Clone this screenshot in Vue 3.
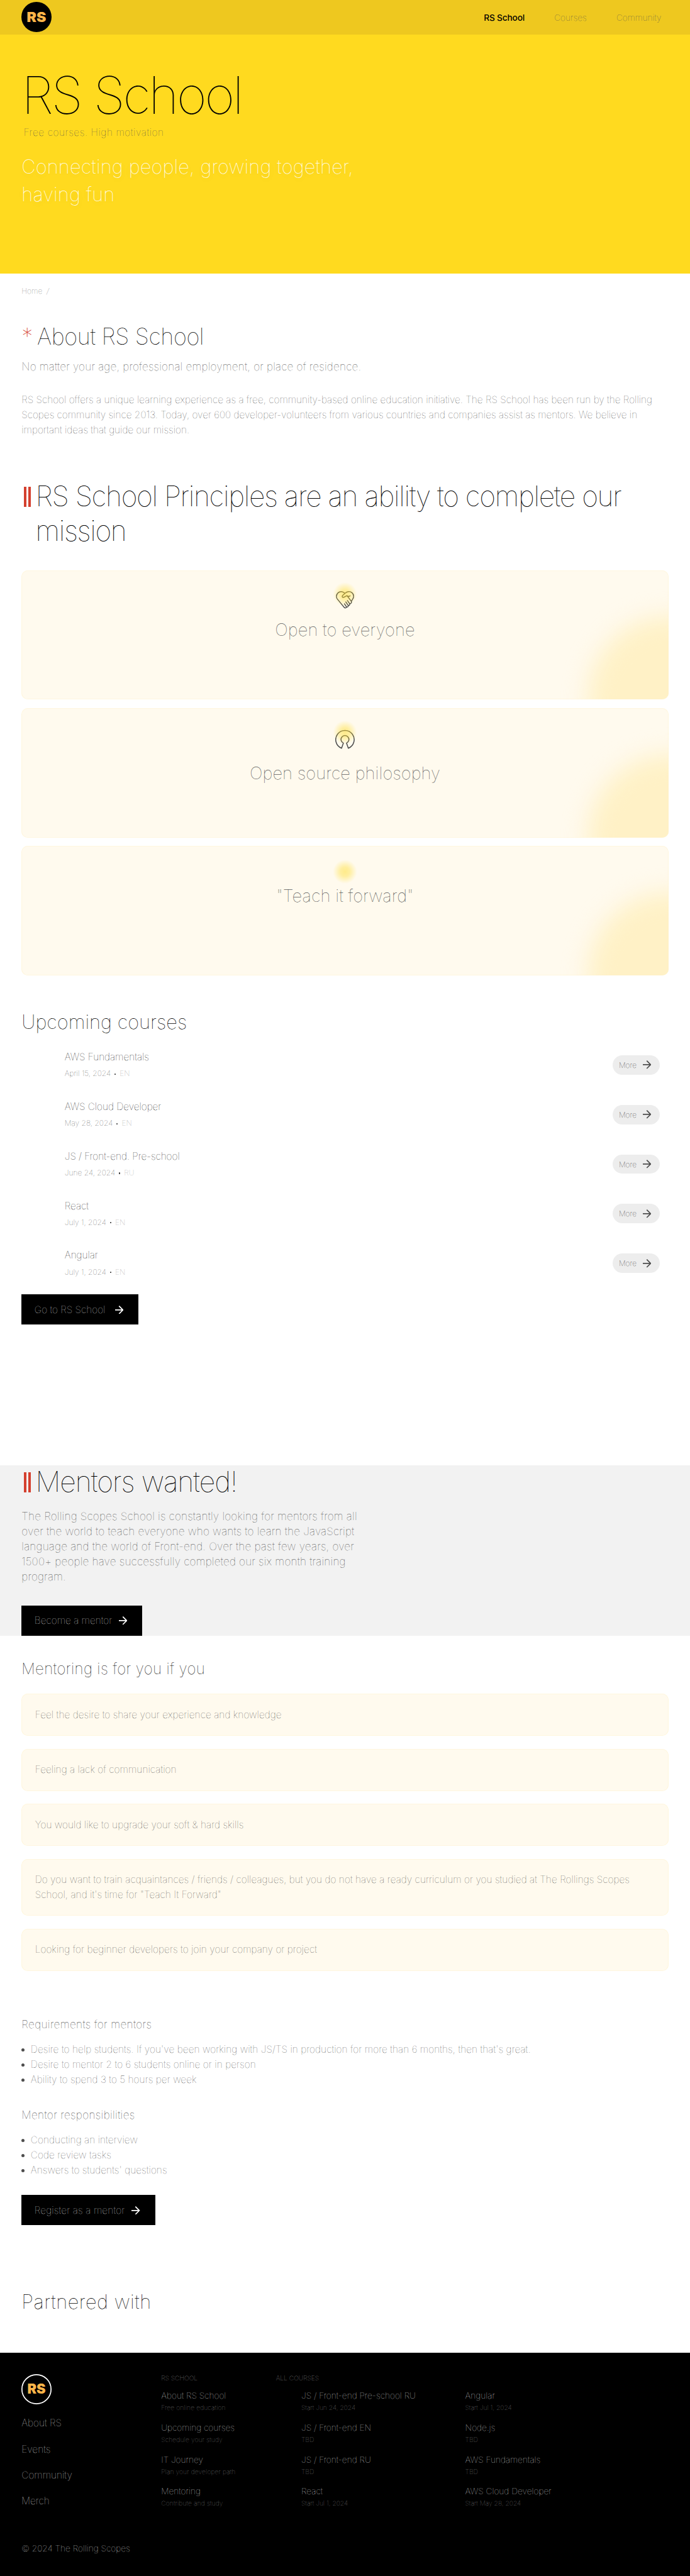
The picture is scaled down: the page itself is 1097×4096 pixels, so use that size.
<script setup>
const nav = [
  { label: 'RS School', active: true },
  { label: 'Courses' },
  { label: 'Community' },
]
const principles = [
  { title: 'Open to everyone', icon: 'heart' },
  { title: 'Open source philosophy', icon: 'source' },
  { title: '"Teach it forward"', icon: 'teach' },
]
const courses = [
  { title: 'AWS Fundamentals', date: 'April 15, 2024', lang: 'EN' },
  { title: 'AWS Cloud Developer', date: 'May 28, 2024', lang: 'EN' },
  { title: 'JS / Front-end. Pre-school', date: 'June 24, 2024', lang: 'RU' },
  { title: 'React', date: 'July 1, 2024', lang: 'EN' },
  { title: 'Angular', date: 'July 1, 2024', lang: 'EN' },
]
const reasons = [
  'Feel the desire to share your experience and knowledge',
  'Feeling a lack of communication',
  'You would like to upgrade your soft & hard skills',
  'Do you want to train acquaintances / friends / colleagues, but you do not have a ready curriculum or you studied at The Rollings Scopes School, and it\'s time for "Teach It Forward"',
  'Looking for beginner developers to join your company or project',
]
const requirements = [
  "Desire to help students. If you've been working with JS/TS in production for more than 6 months, then that's great.",
  'Desire to mentor 2 to 6 students online or in person',
  'Ability to spend 3 to 5 hours per week',
]
const responsibilities = ['Conducting an interview', 'Code review tasks', "Answers to students' questions"]
const footerLinks = ['About RS', 'Events', 'Community', 'Merch']
const schoolLinks = [
  ['About RS School', 'Free online education'],
  ['Upcoming courses', 'Schedule your study'],
  ['IT Journey', 'Plan your developer path'],
  ['Mentoring', 'Contribute and study'],
]
const coursesLeft = [
  ['JS / Front-end Pre-school RU', 'Start Jun 24, 2024'],
  ['JS / Front-end EN', 'TBD'],
  ['JS / Front-end RU', 'TBD'],
  ['React', 'Start Jul 1, 2024'],
]
const coursesRight = [
  ['Angular', 'Start Jul 1, 2024'],
  ['Node.js', 'TBD'],
  ['AWS Fundamentals', 'TBD'],
  ['AWS Cloud Developer', 'Start May 28, 2024'],
]
</script>

<template>
  <div class="page">
    <header class="header">
      <svg class="logo" viewBox="0 0 56 56">
        <circle cx="28" cy="28" r="28" fill="#000" />
        <text x="10" y="37" class="logo-text" textLength="36" lengthAdjust="spacingAndGlyphs">RS</text>
      </svg>
      <nav class="nav">
        <a v-for="n in nav" :key="n.label" :class="{ active: n.active }">{{ n.label }}</a>
      </nav>
    </header>

    <section class="hero">
      <h1>RS School</h1>
      <p class="hero-sub">Free courses. High motivation</p>
      <p class="hero-tag">Connecting people, growing together, having fun</p>
    </section>

    <div class="crumbs"><span>Home</span><i>/</i></div>

    <section class="wrap">
      <h2 class="about-title"><span class="star">*</span>About RS School</h2>
      <p class="lead">No matter your age, professional employment, or place of residence.</p>
      <p class="about-text">RS School offers a unique learning experience as a free, community-based online education initiative. The RS School has been run by the Rolling Scopes community since 2013. Today, over 600 developer-volunteers from various countries and companies assist as mentors. We believe in important ideas that guide our mission.</p>

      <div class="bar-title principles-title">
        <span class="bars"><b></b><b></b></span>
        <h2>RS School Principles are an ability to complete our mission</h2>
      </div>

      <div class="principles">
        <article v-for="p in principles" :key="p.title" class="principle" :class="p.icon">
          <div class="corner"></div>
          <div class="principle-icon">
            <svg v-if="p.icon === 'heart'" width="36" height="34" viewBox="0 0 36 34" fill="none" stroke="#4d4d4d" stroke-width="1.7" stroke-linecap="round" stroke-linejoin="round">
              <path d="M17.800 5.200C14.500 1.200 8.800 .9 5.200 4.200C1.400 7.800 1.200 13 4.500 16.500L16.300 31C17.800 33 20.500 32.500 21 30.500C23 31 24.500 29.500 24 27.600C26 28 27.600 26.200 26.600 24.200C29 24.600 31 22.500 29.800 20L32 16.500C35 13 34.800 7.500 31.300 4.200C27.500 .9 22 1.200 18.300 5L13.500 9.400C12.200 10.900 13.200 13 15.500 12.600C18 12.200 20 9.700 22 9.700L29.800 20M22 9.700L25.200 11L27.600 9.800M17 24.500L21 30.500M19.500 21L24 27.600M22.500 18.500L26.600 24.200" />
            </svg>
            <svg v-else-if="p.icon === 'source'" width="36" height="36" viewBox="0 0 36 36" fill="none" stroke="#4d4d4d" stroke-width="1.8" stroke-linejoin="round">
              <path d="M11.700 34.700A17.100 17.100 0 1 1 24.300 34.700L20.900 25.200A7.300 7.300 0 1 0 15.100 25.200Z" />
            </svg>
            <span class="glow"></span>
          </div>
          <h3>{{ p.title }}</h3>
        </article>
      </div>

      <h2 class="upcoming">Upcoming courses</h2>
      <ul class="courses">
        <li v-for="c in courses" :key="c.title">
          <div>
            <p class="course-title">{{ c.title }}</p>
            <p class="course-date"><span>{{ c.date }}</span><b></b><em>{{ c.lang }}</em></p>
          </div>
          <a class="more">More
            <svg width="16" height="16" viewBox="0 0 16 16" fill="none" stroke="#4d4d4d" stroke-width="2"><path d="M0 8H14.500M7.300 .8L14.500 8L7.300 15.200" /></svg>
          </a>
        </li>
      </ul>
      <a class="btn btn-go">Go to RS School
        <svg width="16" height="16" viewBox="0 0 16 16" fill="none" stroke="#fff" stroke-width="2"><path d="M0 8H14.500M7.300 .8L14.500 8L7.300 15.200" /></svg>
      </a>
    </section>

    <section class="mentors">
      <div class="bar-title">
        <span class="bars"><b></b><b></b></span>
        <h2>Mentors wanted!</h2>
      </div>
      <p class="mentors-text">The Rolling Scopes School is constantly looking for mentors from all over the world to teach everyone who wants to learn the JavaScript language and the world of Front-end. Over the past few years, over 1500+ people have successfully completed our six month training program.</p>
      <a class="btn btn-become">Become a mentor
        <svg width="16" height="16" viewBox="0 0 16 16" fill="none" stroke="#fff" stroke-width="2"><path d="M0 8H14.500M7.300 .8L14.500 8L7.300 15.200" /></svg>
      </a>
    </section>

    <section class="wrap">
      <h3 class="mentoring-title">Mentoring is for you if you</h3>
      <div class="reasons">
        <p v-for="r in reasons" :key="r">{{ r }}</p>
      </div>
      <h4 class="req-title">Requirements for mentors</h4>
      <ul class="dots"><li v-for="r in requirements" :key="r">{{ r }}</li></ul>
      <h4 class="resp-title">Mentor responsibilities</h4>
      <ul class="dots"><li v-for="r in responsibilities" :key="r">{{ r }}</li></ul>
      <a class="btn btn-register">Register as a mentor
        <svg width="16" height="16" viewBox="0 0 16 16" fill="none" stroke="#fff" stroke-width="2"><path d="M0 8H14.500M7.300 .8L14.500 8L7.300 15.200" /></svg>
      </a>
      <h2 class="partners">Partnered with</h2>
    </section>

    <footer class="footer">
      <div class="footer-main">
        <div class="footer-nav">
          <svg class="logo" viewBox="0 0 56 56">
            <circle cx="28" cy="28" r="27" fill="#000" stroke="#fff" stroke-width="2" />
            <text x="11" y="36.500" class="logo-text" textLength="34" lengthAdjust="spacingAndGlyphs">RS</text>
          </svg>
          <a v-for="l in footerLinks" :key="l">{{ l }}</a>
        </div>
        <div class="footer-col footer-school">
          <h5>RS SCHOOL</h5>
          <div v-for="l in schoolLinks" :key="l[0]" class="entry"><p>{{ l[0] }}</p><small>{{ l[1] }}</small></div>
        </div>
        <div class="footer-col">
          <h5>ALL COURSES</h5>
          <div class="footer-grid">
            <div>
              <div v-for="l in coursesLeft" :key="l[0]" class="entry"><p>{{ l[0] }}</p><small>{{ l[1] }}</small></div>
            </div>
            <div>
              <div v-for="l in coursesRight" :key="l[0]" class="entry"><p>{{ l[0] }}</p><small>{{ l[1] }}</small></div>
            </div>
          </div>
        </div>
      </div>
      <p class="copy">© 2024 The Rolling Scopes</p>
    </footer>
  </div>
</template>

<style>
html, body { margin: 0; background: #fff; overflow: hidden; }
</style>

<style scoped>
.page {
  zoom: 0.85703;
  width: 1280px;
  height: 4779.200px;
  overflow: hidden;
  font-family: Inter, "Liberation Sans", sans-serif;
  font-weight: 100;
  color: #000;
  background: #fff;
}
h1, h2, h3, h4, h5, p, ul { margin: 0; padding: 0; font-weight: inherit; list-style: none; }
em { font-style: normal; }

.header {
  display: flex;
  align-items: center;
  justify-content: space-between;
  box-sizing: border-box;
  height: 64px;
  padding: 0 53px 0 40px;
  background: #eec81f;
}
.logo { display: block; width: 56px; height: 56px; }
.logo-text { font-family: Inter, sans-serif; font-weight: 900; font-size: 25px; fill: #ffb64a; }
.nav { display: flex; gap: 55px; padding-top: 1px; font-size: 16px; line-height: 24px; }
.nav a { color: #4d4d4d; }
.nav .active { color: #000; font-weight: 500; letter-spacing: -.2px; }

.hero { box-sizing: border-box; height: 443px; padding: 55px 40px 0; background: #ffda1f; }
.hero h1 { font-size: 96px; line-height: 116px; letter-spacing: -3.840px; }
.hero-sub { padding-left: 4px; font-size: 18px; line-height: 24px; letter-spacing: .68px; color: #4d4d4d; }
.hero-tag { width: 640px; margin-top: 24px; font-size: 36px; line-height: 52px; letter-spacing: .15px; color: #fff; text-shadow: 0 4px 12px rgba(0, 0, 0, .1); }

.crumbs { display: flex; gap: 8px; margin-top: 23px; padding-left: 40px; font-size: 14px; line-height: 20px; color: #666; }
.wrap { padding: 0 40px; }

.about-title { display: flex; margin-top: 48px; font-size: 42px; line-height: 54px; letter-spacing: -.42px; }
.star { width: 29px; color: #d4402f; }
.lead { margin-top: 14px; font-size: 20px; line-height: 28px; letter-spacing: .22px; color: #4d4d4d; }
.about-text { margin-top: 34px; font-size: 18px; line-height: 28px; color: #4d4d4d; }

.bar-title { display: flex; }
.bar-title h2 { font-size: 52px; line-height: 64px; letter-spacing: -1.600px; }
.bars { display: flex; gap: 3.500px; flex: none; box-sizing: border-box; width: 26px; padding: 14px 0 0 4.500px; }
.bars b { width: 4.500px; height: 37px; background: #d4402f; }
.principles-title { margin-top: 77px; }

.principles { display: grid; gap: 16px; margin-top: 41px; }
.principle {
  position: relative;
  overflow: hidden;
  box-sizing: border-box;
  height: 240px;
  padding-top: 38px;
  border-radius: 12px;
  background: #fffaee;
  box-shadow: inset 0 0 0 1px #fff5da;
  text-align: center;
}
.principle h3 { position: relative; font-size: 32px; line-height: 40px; color: #5c5c5c; }
.principle-icon { position: relative; display: flex; justify-content: center; height: 52px; }
.source .principle-icon { height: 62px; padding-top: 2px; box-sizing: border-box; }
.teach .principle-icon { height: 34px; }
.glow {
  position: absolute;
  top: -15px;
  left: 50%;
  width: 44px;
  height: 44px;
  margin-left: -22px;
  background: radial-gradient(circle, rgba(255, 220, 40, .5) 0, rgba(255, 220, 40, .4) 28%, rgba(255, 220, 40, .12) 58%, rgba(255, 220, 40, 0) 72%);
}
.teach .glow { top: -13px; }
.corner {
  position: absolute;
  right: -155px;
  bottom: -150px;
  width: 304px;
  height: 304px;
  border-radius: 50%;
  background: #fff1c6;
  filter: blur(22px);
}

.upcoming { margin-top: 64px; font-size: 36px; line-height: 44px; }
.courses { margin-top: 12px; }
.courses li { display: flex; align-items: center; justify-content: space-between; height: 92px; padding: 0 16px 0 80px; }
.course-title { font-size: 18px; line-height: 24px; letter-spacing: -.04px; }
.course-date { display: flex; align-items: center; margin-top: 8px; font-size: 14px; line-height: 20px; color: #444; }
.course-date b { width: 2.500px; height: 2.500px; margin: 2px 7px 0; border-radius: 1px; background: #444; }
.course-date em { color: #999; }
.more {
  display: flex;
  align-items: center;
  justify-content: space-between;
  box-sizing: border-box;
  width: 88px;
  height: 36px;
  padding: 0 16px 0 12px;
  border-radius: 18px;
  background: #ededed;
  color: #111;
  font-size: 14px;
}
.btn {
  display: flex;
  align-items: center;
  justify-content: space-between;
  box-sizing: border-box;
  height: 56px;
  padding: 0 28px 0 24px;
  background: #000;
  color: #d0d0d0;
  font-size: 18px;
}
.btn-go { width: 217px; margin-top: 12px; }
.btn-become { width: 224px; margin-top: 40px; }
.btn-register { width: 248px; margin-top: 32px; letter-spacing: .15px; }

.mentors { height: 316px; margin-top: 261px; padding: 0 40px; background: #f2f2f2; }
.mentors .bar-title h2 { line-height: 62px; letter-spacing: -1.200px; }
.mentors .bars { padding-top: 13px; }
.mentors-text { width: 624px; margin-top: 18px; font-size: 20px; line-height: 28px; letter-spacing: .22px; color: #4d4d4d; }

.mentoring-title { padding-top: 44px; font-size: 28px; line-height: 34px; letter-spacing: .43px; }
.reasons { display: grid; gap: 24px; margin-top: 30px; }
.reasons p { padding: 25px; border-radius: 12px; background: #fffaee; box-shadow: inset 0 0 0 1px #fff5da; font-size: 18px; line-height: 28px; letter-spacing: .06px; color: #4d4d4d; }
.req-title { margin-top: 85px; font-size: 20px; line-height: 28px; letter-spacing: .42px; color: #333; }
.resp-title { margin-top: 37px; font-size: 20px; line-height: 28px; letter-spacing: .42px; color: #333; }
.dots { margin-top: 19px; font-size: 18px; line-height: 28px; letter-spacing: .07px; color: #4d4d4d; }
.dots li { display: flex; align-items: center; gap: 11px; }
.dots li::before { content: ""; width: 6px; height: 6px; margin-top: 2px; border-radius: 50%; background: #4d4d4d; }
.partners { margin-top: 120px; font-size: 36px; line-height: 44px; letter-spacing: .6px; }

.footer { box-sizing: border-box; height: 418px; margin-top: 72px; padding: 40px 40px 0; background: #000; color: #d4d4d4; }
.footer-main { display: flex; height: 312px; }
.footer-nav { display: flex; flex-direction: column; gap: 24px; width: 259px; font-size: 18px; line-height: 24px; }
.footer-col { width: 213px; }
.footer-col h5 { margin-bottom: 15px; font-size: 12px; line-height: 16px; color: #aaa; }
.footer-grid { display: grid; grid-template-columns: 304px 304px; padding-left: 47px; }
.entry { height: 59px; }
.entry p { font-size: 16px; line-height: 20px; white-space: nowrap; }
.entry small { display: block; margin-top: 4.500px; font-size: 12px; line-height: 16px; color: #888; }
.footer-school small { letter-spacing: .14px; }
.copy { font-size: 16px; line-height: 24px; }
</style>
